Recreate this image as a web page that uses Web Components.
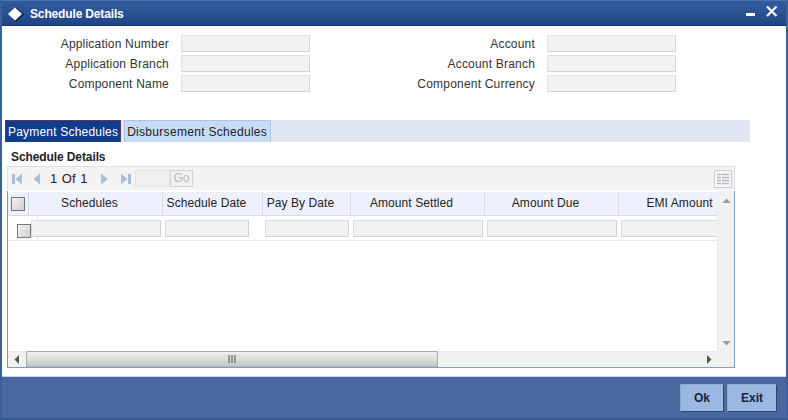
<!DOCTYPE html>
<html>
<head>
<meta charset="utf-8">
<title>Schedule Details</title>
<style>
  html, body { margin: 0; padding: 0; background: #fff; }
  body { font: 12px "Liberation Sans", Arial, sans-serif; color: #333; }
</style>
</head>
<body>
<schedule-window>
  <title-bar slot="title">Schedule Details</title-bar>

  <field-row>
    <form-field label="Application Number"></form-field>
    <form-field label="Account"></form-field>
  </field-row>
  <field-row>
    <form-field label="Application Branch"></form-field>
    <form-field label="Account Branch"></form-field>
  </field-row>
  <field-row>
    <form-field label="Component Name"></form-field>
    <form-field label="Component Currency"></form-field>
  </field-row>

  <tab-bar>
    <tab-item active>Payment Schedules</tab-item>
    <tab-item>Disbursement Schedules</tab-item>
  </tab-bar>

  <section-title>Schedule Details</section-title>
  <pager-bar></pager-bar>
  <schedule-grid></schedule-grid>

  <action-button slot="footer">Ok</action-button>
  <action-button slot="footer">Exit</action-button>
</schedule-window>

<script>
  class ScheduleWindow extends HTMLElement {
    constructor() {
      super();
      const shadow = this.attachShadow({ mode: "open" });
      shadow.innerHTML = `
        <style>
          :host {
            display: flex;
            flex-direction: column;
            width: 788px;
            height: 420px;
            box-sizing: border-box;
            border-left: 2px solid #3a5f9b;
            border-right: 2px solid #3a5f9b;
            border-bottom: 2px solid #39598f;
            background: #fff;
            overflow: hidden;
          }
          .content {
            flex: 1;
            min-height: 0;
            padding-top: 9px;
            border-bottom: 1px solid #c5d3e2;
          }
          .footer {
            height: 41px;
            box-sizing: border-box;
            flex: none;
            display: flex;
            justify-content: flex-end;
            gap: 3px;
            padding: 7px 9px 0 0;
            background: #4a689f;
          }
        </style>
        <slot name="title"></slot>
        <div class="content"><slot></slot></div>
        <div class="footer"><slot name="footer"></slot></div>
      `;
    }
  }

  class TitleBar extends HTMLElement {
    constructor() {
      super();
      const shadow = this.attachShadow({ mode: "open" });
      shadow.innerHTML = `
        <style>
          :host {
            display: flex;
            align-items: center;
            flex: none;
            height: 26px;
            box-sizing: border-box;
            margin-right: -2px;
            padding: 3px 0 0 5px;
            color: #fff;
            font-weight: bold;
            font-size: 12px;
            border-top: 1px solid #4f74ab;
            border-bottom: 1px solid #17336a;
            background: linear-gradient(#2f5a9e, #2c5596 40%, #1f4485);
          }
          .logo { margin-right: 5px; flex: none; }
          .text { flex: 1; position: relative; top: -1px; letter-spacing: -0.15px; }
          .controls { flex: none; margin-right: 10px; position: relative; top: -3px; }
        </style>
        <svg class="logo" width="18" height="17" viewBox="0 0 18 17">
          <path d="M9 1 L17.500 8.500 L9 16 L5 12.500 Z" fill="#0f2a5c"/>
          <path d="M8 1.500 L15 8 L8 14.500 L1 8 Z" fill="#fff"/>
        </svg>
        <span class="text"><slot></slot></span>
        <svg class="controls" width="32" height="13" viewBox="0 0 32 13">
          <rect x="0" y="8" width="9" height="3" fill="#fff"/>
          <path d="M21 1.500 L30.500 11 M30.500 1.500 L21 11" stroke="#fff" stroke-width="2.200" fill="none"/>
        </svg>
      `;
    }
  }

  class FieldRow extends HTMLElement {
    constructor() {
      super();
      const shadow = this.attachShadow({ mode: "open" });
      shadow.innerHTML = `
        <style>
          :host { display: flex; height: 17px; margin-bottom: 3px; }
          ::slotted(form-field:first-child) { --label-width: 167px; }
          ::slotted(form-field:last-child) { --label-width: 225px; }
        </style>
        <slot></slot>
      `;
    }
  }

  class FormField extends HTMLElement {
    constructor() {
      super();
      const shadow = this.attachShadow({ mode: "open" });
      shadow.innerHTML = `
        <style>
          :host { display: flex; align-items: center; gap: 12px; }
          label {
            width: var(--label-width);
            text-align: right;
            white-space: nowrap;
            letter-spacing: 0.2px;
          }
          .box {
            width: 129px;
            height: 17px;
            box-sizing: border-box;
            background: #f2f2f2;
            border: 1px solid #e2e2e2;
            border-right-color: #d4d4d4;
            border-bottom-color: #d4d4d4;
          }
        </style>
        <label></label>
        <div class="box"></div>
      `;
      shadow.querySelector("label").textContent = this.getAttribute("label");
    }
  }

  class TabBar extends HTMLElement {
    constructor() {
      super();
      const shadow = this.attachShadow({ mode: "open" });
      shadow.innerHTML = `
        <style>
          :host {
            display: flex;
            gap: 3px;
            width: 745px;
            height: 22px;
            margin: 28px 0 0 3px;
            background: #e0e7f3;
          }
        </style>
        <slot></slot>
      `;
    }
  }

  class TabItem extends HTMLElement {
    constructor() {
      super();
      const shadow = this.attachShadow({ mode: "open" });
      shadow.innerHTML = `
        <style>
          :host {
            display: flex;
            align-items: center;
            box-sizing: border-box;
            height: 22px;
            padding: 0 3px 0 2px;
            white-space: nowrap;
            letter-spacing: 0.3px;
            color: #222;
            background: #c6dcf6;
            border: 1px solid #a9c4e4;
            border-bottom: 0;
          }
          :host([active]) {
            padding: 0 2px;
            letter-spacing: 0.2px;
            color: #fff;
            background: #0f3d8c;
            border-color: #5c3a5c;
          }
        </style>
        <slot></slot>
      `;
    }
  }

  class SectionTitle extends HTMLElement {
    constructor() {
      super();
      const shadow = this.attachShadow({ mode: "open" });
      shadow.innerHTML = `
        <style>
          :host {
            display: flex;
            align-items: flex-end;
            height: 21px;
            padding: 0 0 2px 9px;
            box-sizing: border-box;
            font-weight: bold;
            letter-spacing: -0.1px;
            color: #222;
            margin-top: 3px;
          }
        </style>
        <slot></slot>
      `;
    }
  }

  class PagerBar extends HTMLElement {
    constructor() {
      super();
      const shadow = this.attachShadow({ mode: "open" });
      const c = "#a9bcd8";
      shadow.innerHTML = `
        <style>
          :host {
            display: flex;
            align-items: center;
            width: 728px;
            height: 24px;
            box-sizing: border-box;
            margin-left: 5px;
            padding-left: 4px;
            background: #f3f3f3;
            border: 1px solid #dfe3e8;
            border-bottom: 0;
            font-size: 13px;
            color: #222;
          }
          svg { flex: none; }
          .first { margin-right: 9px; }
          .count { width: 37px; margin: 0 13px 0 9px; white-space: nowrap; word-spacing: 1px; }
          .next { margin-right: 11px; }
          .page {
            width: 35px; height: 17px; box-sizing: border-box; margin-left: 4px;
            background: #f0f0f0; border: 1px solid #e4e4e4;
          }
          .go {
            width: 23px; height: 17px; box-sizing: border-box;
            border: 1px solid #d4d4d4; background: #f0f0f0; color: #b9b9b9;
            text-align: center; line-height: 15px; font-size: 12px;
          }
          .cols { margin-left: auto; margin-right: 2px; }
        </style>
        <svg class="first" width="11" height="12" viewBox="0 0 11 12"><rect x="0" y="1" width="3" height="10" fill="${c}"/><path d="M10 0.500 V11.500 L3.500 6 Z" fill="${c}"/></svg>
        <svg class="prev" width="9" height="12" viewBox="0 0 9 12"><path d="M8 0.500 V11.500 L1.500 6 Z" fill="${c}"/></svg>
        <span class="count">1 Of 1</span>
        <svg class="next" width="9" height="12" viewBox="0 0 9 12"><path d="M1 0.500 V11.500 L7.500 6 Z" fill="${c}"/></svg>
        <svg class="last" width="11" height="12" viewBox="0 0 11 12"><path d="M1 0.500 V11.500 L7.500 6 Z" fill="${c}"/><rect x="8" y="1" width="3" height="10" fill="${c}"/></svg>
        <div class="page"></div>
        <div class="go">Go</div>
        <svg class="cols" width="18" height="18" viewBox="0 0 18 18">
          <rect x="0.500" y="0.500" width="17" height="17" fill="#f7f7f7" stroke="#c3cedd"/>
          <path d="M3 4.500 H15 M3 7.500 H15 M3 10.500 H15 M3 13.500 H15" stroke="#b4b9c0" stroke-width="1.500"/>
          <path d="M7.500 3 V15" stroke="#f7f7f7"/>
        </svg>
      `;
    }
  }

  class ScheduleGrid extends HTMLElement {
    constructor() {
      super();
      const shadow = this.attachShadow({ mode: "open" });
      const heads = [
        ["Schedules", 134], ["Schedule Date", 100], ["Pay By Date", 88],
        ["Amount Settled", 134], ["Amount Due", 134], ["EMI Amount", 134],
      ];
      const headCells = heads
        .map(([t, w]) => `<div class="th" style="width:${w}px">${t}</div>`)
        .join("");
      const boxWidths = [130, 84, 84, 130, 130, 130];
      const rowCells = heads
        .map(([t, w], i) => `<div class="td" style="width:${w}px"><div class="box" style="width:${boxWidths[i]}px"></div></div>`)
        .join("");
      shadow.innerHTML = `
        <style>
          :host {
            display: flex;
            flex-direction: column;
            width: 728px;
            height: 177px;
            box-sizing: border-box;
            margin: 1px 0 0 5px;
            border-left: 1px solid #7f9fc0;
            border-right: 1px solid #7f9fc0;
            border-bottom: 1px solid #7f9fc0;
            background: #fff;
            color: #222;
          }
          .top { flex: 1; min-height: 0; display: flex; }
          .main { flex: 1; min-width: 0; overflow: hidden; padding-top: 1px; }
          .head, .row { display: flex; width: max-content; }
          .head { height: 23px; background: #eef1fb; border-bottom: 1px solid #d3dcea; box-sizing: content-box; }
          .check-head {
            width: 21px; flex: none; display: flex; align-items: center; justify-content: center;
            box-sizing: border-box; border-right: 1px solid #d3dcea;
          }
          .check {
            width: 14px; height: 14px; box-sizing: border-box; flex: none;
            border: 1px solid #777;
            background: linear-gradient(135deg, #f4f4f4, #cfcfcf);
          }
          .th {
            flex: none; box-sizing: border-box; padding-right: 12px; text-align: center;
            line-height: 23px; border-right: 1px solid #d3dcea; white-space: nowrap;
            letter-spacing: 0.08px;
          }
          .row {
            height: 24px; border-bottom: 1px solid #e6ebf2;
            background: linear-gradient(#e6ebf2, #e6ebf2) 29px 0 / 1px 100% no-repeat;
          }
          .check-cell {
            width: 20px; flex: none; padding: 8px 0 0 9px; box-sizing: border-box;
          }
          .td { flex: none; box-sizing: border-box; padding: 4px 0 0 3px; position: relative; }
          .box {
            height: 17px; box-sizing: border-box; background: #f2f2f2;
            border: 1px solid #dcdcdc; border-right-color: #d0d0d0; border-bottom-color: #d0d0d0;
          }
          .vbar {
            flex: none; width: 17px; background: #f1f1f1; display: flex;
            flex-direction: column; justify-content: space-between; align-items: center;
            padding: 7px 0 0; box-sizing: border-box; border-left: 1px solid #ececec;
          }
          .hbar {
            flex: none; height: 16px; display: flex; align-items: center;
            background: #f1f1f1; border-top: 1px solid #e6e6e6; box-sizing: border-box; position: relative;
          }
          .thumb {
            position: absolute; left: 18px; top: -1px; width: 412px; height: 16px; box-sizing: border-box;
            background: linear-gradient(#f0f0f0, #e2e2e2 40%, #c6c6c6);
            border: 1px solid #a4a4a4; border-bottom-color: #b8b8b8; border-radius: 2px 2px 0 0;
            display: flex; align-items: center; justify-content: center;
          }
          .left { position: absolute; left: 6px; top: 3px; }
          .right { position: absolute; right: 22px; top: 3px; }
          .corner { position: absolute; right: 0; top: -1px; width: 17px; height: 16px; background: #f1f1f1; }
          .down { margin-bottom: 5px; }
        </style>
        <div class="top">
          <div class="main">
            <div class="head"><div class="check-head"><div class="check"></div></div>${headCells}</div>
            <div class="row">
              <div class="check-cell"><div class="check"></div></div>
              ${rowCells}
            </div>
          </div>
          <div class="vbar">
            <svg width="9" height="5" viewBox="0 0 9 5"><path d="M0.500 5 L4.500 0.500 L8.500 5 Z" fill="#9a9a9a"/></svg>
            <svg class="down" width="9" height="5" viewBox="0 0 9 5"><path d="M0.500 0 L4.500 4.500 L8.500 0 Z" fill="#9a9a9a"/></svg>
          </div>
        </div>
        <div class="hbar">
          <svg class="left" width="5" height="9" viewBox="0 0 5 9"><path d="M5 0 L0.500 4.500 L5 9 Z" fill="#555"/></svg>
          <div class="thumb">
            <svg width="9" height="8" viewBox="0 0 9 8"><path d="M1 0 V8 M4 0 V8 M7 0 V8" stroke="#666" stroke-width="1.200"/></svg>
          </div>
          <svg class="right" width="5" height="9" viewBox="0 0 5 9"><path d="M0 0 L4.500 4.500 L0 9 Z" fill="#555"/></svg>
          <div class="corner"></div>
        </div>
      `;
    }
  }

  class ActionButton extends HTMLElement {
    constructor() {
      super();
      const shadow = this.attachShadow({ mode: "open" });
      shadow.innerHTML = `
        <style>
          :host {
            display: flex;
            align-items: center;
            justify-content: center;
            height: 28px;
            min-width: 44px;
            box-sizing: border-box;
            background: #9ab8e2;
            color: #16233c;
            font-weight: bold;
            font-size: 12px;
            border: 1px solid;
            border-color: #8ea8cf #2c426e #2c426e #8ea8cf;
          }
          :host(:last-of-type) { min-width: 50px; }
        </style>
        <slot></slot>
      `;
    }
  }

  customElements.define("schedule-window", ScheduleWindow);
  customElements.define("title-bar", TitleBar);
  customElements.define("field-row", FieldRow);
  customElements.define("form-field", FormField);
  customElements.define("tab-bar", TabBar);
  customElements.define("tab-item", TabItem);
  customElements.define("section-title", SectionTitle);
  customElements.define("pager-bar", PagerBar);
  customElements.define("schedule-grid", ScheduleGrid);
  customElements.define("action-button", ActionButton);
</script>
</body>
</html>
